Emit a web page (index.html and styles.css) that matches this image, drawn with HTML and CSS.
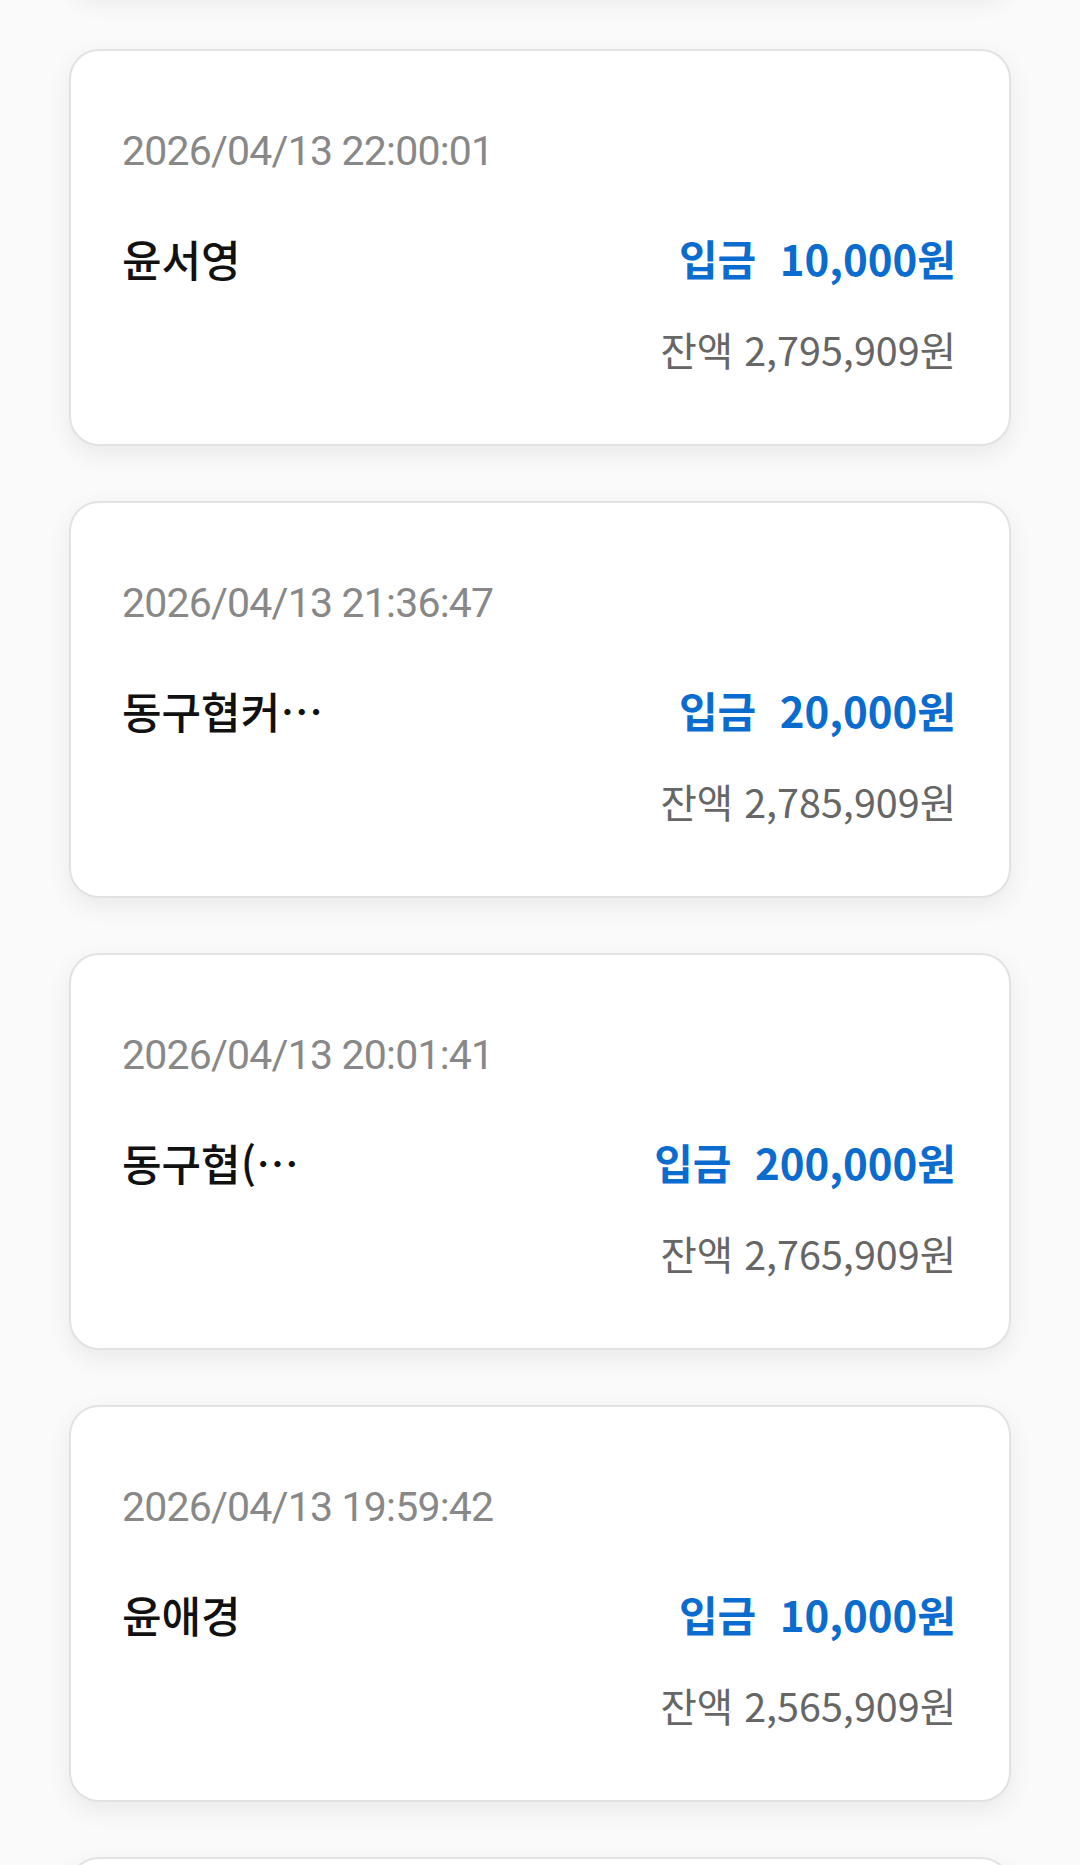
FILE: index.html
```html
<!DOCTYPE html>
<html lang="ko">
<head>
    <meta charset="UTF-8">
    <title>거래내역</title>
    <link rel="stylesheet" href="styles.css">
</head>
<body>
    <!-- Transaction list -->
    <main class="history">
        <div class="tx-card">
            <p class="tx-date">2026/04/13 22:10:15</p>
            <div class="tx-row">
                <span class="tx-name">김민수</span>
                <span class="tx-amount">입금&nbsp;&nbsp;10,000원</span>
            </div>
            <p class="tx-balance">잔액 2,805,909원</p>
        </div>

        <div class="tx-card">
            <p class="tx-date">2026/04/13 22:00:01</p>
            <div class="tx-row">
                <span class="tx-name">윤서영</span>
                <span class="tx-amount">입금&nbsp;&nbsp;10,000원</span>
            </div>
            <p class="tx-balance">잔액 2,795,909원</p>
        </div>

        <div class="tx-card">
            <p class="tx-date">2026/04/13 21:36:47</p>
            <div class="tx-row">
                <span class="tx-name">동구협커…</span>
                <span class="tx-amount">입금&nbsp;&nbsp;20,000원</span>
            </div>
            <p class="tx-balance">잔액 2,785,909원</p>
        </div>

        <div class="tx-card">
            <p class="tx-date">2026/04/13 20:01:41</p>
            <div class="tx-row">
                <span class="tx-name">동구협(…</span>
                <span class="tx-amount">입금&nbsp;&nbsp;200,000원</span>
            </div>
            <p class="tx-balance">잔액 2,765,909원</p>
        </div>

        <div class="tx-card">
            <p class="tx-date">2026/04/13 19:59:42</p>
            <div class="tx-row">
                <span class="tx-name">윤애경</span>
                <span class="tx-amount">입금&nbsp;&nbsp;10,000원</span>
            </div>
            <p class="tx-balance">잔액 2,565,909원</p>
        </div>

        <div class="tx-card">
            <p class="tx-date">2026/04/13 19:40:03</p>
            <div class="tx-row">
                <span class="tx-name">박지훈</span>
                <span class="tx-amount">입금&nbsp;&nbsp;10,000원</span>
            </div>
            <p class="tx-balance">잔액 2,555,909원</p>
        </div>
    </main>
</body>
</html>
```

FILE: styles.css
```css
body {
    font-family: "Noto Sans CJK KR", "Noto Sans", sans-serif;
    margin: 0;
    padding: 0;
    background-color: #fafafa;
    overflow: hidden;
}

.history {
    display: flex;
    flex-direction: column;
    gap: 55px;
    margin-top: -403px;
    padding: 0 69px;
}

.tx-card {
    box-sizing: border-box;
    height: 397px;
    padding: 80px 53px 0 51px;
    background-color: #fff;
    border: 2px solid #e2e2e2;
    border-radius: 30px;
    box-shadow: 0 8px 24px rgba(0, 0, 0, 0.07);
}

.tx-date {
    margin: 0;
    font-family: Roboto, "Noto Sans CJK KR", sans-serif;
    font-size: 41px;
    line-height: 40px;
    letter-spacing: -0.8px;
    color: #888;
}

.tx-row {
    display: flex;
    justify-content: space-between;
    align-items: center;
    margin-top: 67px;
}

.tx-name {
    font-size: 43px;
    line-height: 40px;
    font-weight: 500;
    color: #111;
}

.tx-amount {
    font-size: 42px;
    line-height: 40px;
    font-weight: 700;
    color: #0a6ccf;
}

.tx-balance {
    margin: 51px 0 0;
    font-size: 39.5px;
    line-height: 40px;
    text-align: right;
    color: #666;
}
```
